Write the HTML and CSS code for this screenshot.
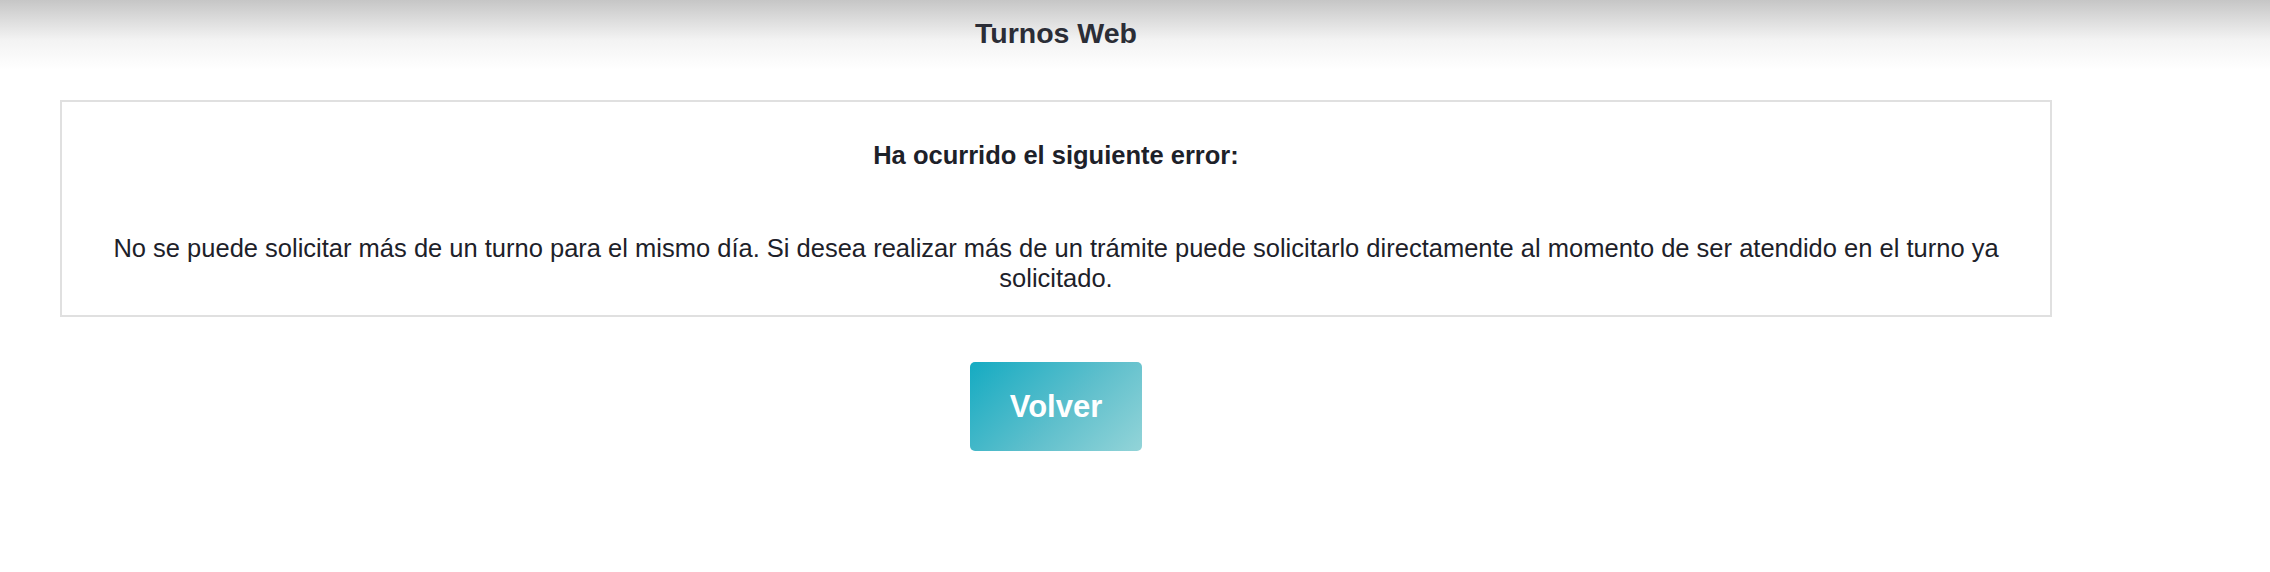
FILE: index.html
```html
<!DOCTYPE html>
<html lang="es">
<head>
<meta charset="utf-8">
<title>Turnos Web</title>
<link rel="stylesheet" href="styles.css">
</head>
<body>
<header class="topbar">
  <div class="wrap">
    <h1 class="title">Turnos Web</h1>
  </div>
</header>
<main class="wrap">
  <section class="error-box">
    <h2 class="error-title">Ha ocurrido el siguiente error:</h2>
    <p class="error-msg">No se puede solicitar más de un turno para el mismo día. Si desea realizar más de un trámite puede solicitarlo directamente al momento de ser atendido en el turno ya solicitado.</p>
  </section>
  <div class="actions">
    <button class="btn-volver" type="button">Volver</button>
  </div>
</main>
</body>
</html>
```

FILE: styles.css
```css
* { box-sizing: border-box; }
html, body { margin: 0; padding: 0; background: #fff; }
body {
  font-family: "Liberation Sans", Arial, Helvetica, sans-serif;
  color: #212529;
}
.wrap {
  width: 2112px;
}
.topbar {
  background: linear-gradient(to bottom, #c6c6c6 0px, #f3f3f3 40px, #ffffff 70px);
  height: 70px;
}
.title {
  margin: 0;
  padding-top: 17px;
  text-align: center;
  font-size: 28.5px;
  line-height: 32px;
  font-weight: 700;
  color: #2b2d36;
}
.error-box {
  margin: 30px 60px 0 60px;
  border: 2px solid #e0e0e0;
  padding: 0 40px;
  height: 217px;
  text-align: center;
}
.error-title {
  margin: 0;
  padding-top: 37px;
  font-size: 25.5px;
  line-height: 32px;
  font-weight: 700;
  color: #1d2129;
}
.error-msg {
  margin: 0;
  padding-top: 62px;
  font-size: 25.5px;
  line-height: 30px;
  color: #1d2129;
}
.actions {
  display: flex;
  justify-content: center;
  padding-top: 45px;
}
.btn-volver {
  width: 172px;
  height: 89px;
  border: 0;
  border-radius: 5px;
  background: linear-gradient(135deg, #15abc2 0%, #5ebfcc 55%, #93d4d8 100%);
  color: #fff;
  font-family: "Liberation Sans", Arial, sans-serif;
  font-size: 31px;
  font-weight: 700;
  cursor: pointer;
}
```
